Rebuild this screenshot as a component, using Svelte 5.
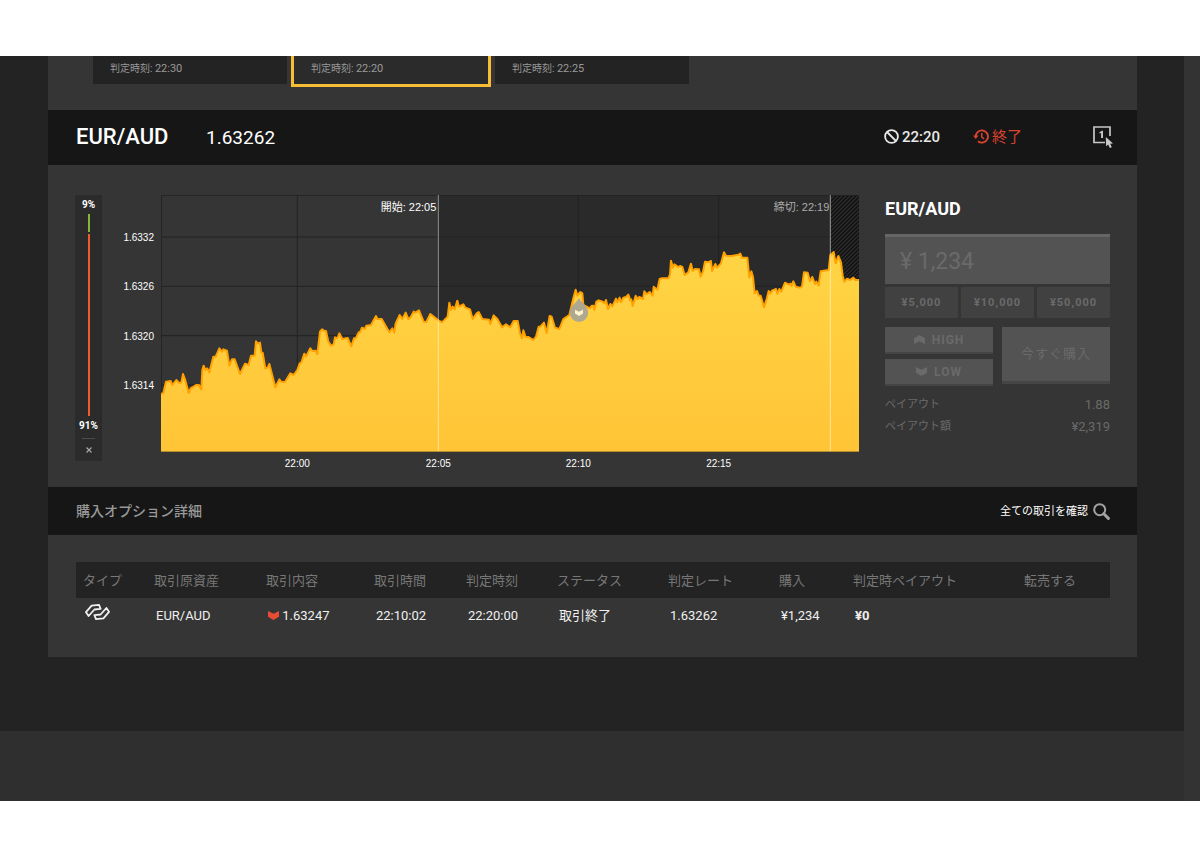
<script>
  const cards = [
    { time: '22:30', active: false },
    { time: '22:20', active: true },
    { time: '22:25', active: false }
  ];

  // Price line in chart units: 2094 wide, 771 high.
  const line =
    '0,596 7,595 15,560 29,558 34,570 46,555 53,563 61,563 66,537 72,553 83,594 89,580 105,570 114,570 121,584 124,525 128,512 133,525 138,520 145,532 157,485 164,485 175,460 183,470 187,463 198,467 205,512 213,493 221,493 237,537 252,506 263,510 270,482 281,482 285,439 291,446 297,443 301,473 305,473 313,520 320,518 325,507 331,530 343,577 355,553 360,560 372,561 388,535 398,540 409,525 416,505 421,503 430,476 435,485 448,460 454,468 464,467 469,478 477,410 483,403 489,407 495,408 502,440 510,452 518,448 522,427 529,430 535,415 544,432 560,429 571,454 579,430 584,430 593,412 597,412 603,398 612,402 616,392 630,390 645,363 649,372 662,372 685,412 694,400 700,413 704,385 716,360 724,372 734,353 742,372 749,367 758,350 763,353 774,346 788,380 796,381 808,357 832,376 843,382 860,365 865,323 870,345 875,335 881,343 889,317 894,335 907,328 912,337 927,343 935,372 947,355 953,351 964,372 984,374 988,387 998,361 1009,372 1023,397 1035,388 1048,397 1058,378 1070,378 1077,415 1083,430 1087,406 1094,426 1103,426 1117,435 1125,425 1133,395 1138,395 1149,383 1157,414 1166,363 1172,365 1182,398 1195,402 1207,372 1225,360 1237,310 1244,284 1249,302 1258,291 1264,295 1267,330 1287,340 1292,332 1297,332 1300,345 1306,320 1313,316 1325,320 1330,325 1335,315 1341,342 1348,327 1354,334 1365,311 1369,322 1376,308 1380,322 1387,308 1395,306 1402,299 1408,316 1411,313 1415,333 1424,302 1430,312 1435,306 1446,312 1450,289 1457,298 1466,291 1475,302 1478,275 1489,284 1496,252 1503,250 1522,250 1527,238 1530,197 1536,218 1540,208 1552,216 1557,213 1564,216 1571,240 1582,232 1590,206 1595,228 1602,222 1614,223 1619,245 1626,230 1632,200 1642,202 1650,198 1653,228 1663,207 1668,218 1680,205 1689,172 1695,182 1711,183 1733,179 1738,176 1743,188 1759,188 1765,248 1771,229 1776,246 1781,295 1788,288 1793,302 1799,302 1809,337 1817,312 1823,288 1828,295 1834,286 1840,284 1845,282 1849,297 1855,282 1861,290 1872,263 1884,269 1889,266 1892,273 1897,259 1904,275 1917,278 1923,275 1929,232 1940,233 1947,259 1954,246 1962,267 1966,260 1973,271 1979,229 2003,225 2008,180 2018,171 2024,205 2032,183 2040,202 2045,242 2050,260 2058,251 2067,255 2077,248 2083,255 2094,255';

  const priceTicks = [
    { label: '1.6332', y: 126 },
    { label: '1.6326', y: 274 },
    { label: '1.6320', y: 422 },
    { label: '1.6314', y: 570 }
  ];
  const timeTicks = [
    { label: '22:00', x: 409 },
    { label: '22:05', x: 832 },
    { label: '22:10', x: 1252 },
    { label: '22:15', x: 1673 }
  ];
  const amounts = ['¥5,000', '¥10,000', '¥50,000'];
  const columns = [
    ['タイプ', 71],
    ['取引原資産', 112],
    ['取引内容', 108],
    ['取引時間', 92],
    ['判定時刻', 91],
    ['ステータス', 111],
    ['判定レート', 111],
    ['購入', 74],
    ['判定時ペイアウト', 171],
    ['転売する', 93]
  ];
  let amount = $state('¥ 1,234');
</script>

<div class="page">
  <div class="content">
    <div class="cards">
      {#each cards as card}
        <div class="card" class:active={card.active}>判定時刻: <span>{card.time}</span></div>
      {/each}
    </div>

    <header class="bar top">
      <h1>EUR/AUD</h1>
      <span class="rate">1.63262</span>
      <span class="status">
        <svg width="15" height="15" viewBox="0 0 15 15" fill="none" stroke="currentColor" stroke-width="1.8">
          <circle cx="7.5" cy="7.5" r="6.4" />
          <path d="M3 3l9 9" />
        </svg>
        22:20
      </span>
      <span class="status ended">
        <svg width="16" height="15" viewBox="0 0 16 15" fill="none" stroke="currentColor">
          <path d="M2.8 8.2A6.1 6.1 0 1 1 5 12.2" stroke-width="1.9" />
          <path d="M0 6.6h5.6L2.8 10z" fill="currentColor" stroke="none" />
          <path d="M8.7 4v4l2.4 1.9" stroke-width="1.5" />
        </svg>
        終了
      </span>
      <button class="oneclick" aria-label="1">
        <svg width="21" height="23" viewBox="0 0 21 23">
          <path d="M17 10V1H1v15.500h11" fill="none" stroke="#c8c8c8" stroke-width="1.7" />
          <path d="M6.500 6.300L8.800 4.700H10V12H8.100V7L6.500 7.600z" fill="#c8c8c8" />
          <path d="M12.800 11l.300 9.200 2.100-1.700 1.600 3.600 2-.900-1.600-3.400 2.800-.300z" fill="#c8c8c8" />
        </svg>
      </button>
    </header>

    <section class="trade">
      <aside class="sentiment">
        <b>9%</b>
        <i class="up"></i>
        <i class="down"></i>
        <b>91%</b>
        <hr />
        <button aria-label="×">
          <svg width="6" height="6" viewBox="0 0 6 6"><path d="M.5.5l5 5m0-5l-5 5" stroke="#aaa" stroke-width="1.1" /></svg>
        </button>
      </aside>

      <div class="chart">
        <div class="plot">
          <svg class="graph" viewBox="0 0 2094 771" preserveAspectRatio="none">
            <defs>
              <linearGradient id="gold" x1="0" y1="0" x2="0" y2="1">
                <stop offset="0" stop-color="#ffd545" />
                <stop offset="1" stop-color="#ffc436" />
              </linearGradient>
              <pattern id="hatch" width="12" height="12" patternUnits="userSpaceOnUse">
                <rect width="12" height="12" fill="#303030" />
                <path d="M-3 3L3-3M0 12L12 0M9 15L15 9" stroke="#121212" stroke-width="5" />
              </pattern>
            </defs>
            <rect x="832" width="1182" height="771" fill="#2a2a2a" />
            <rect x="2010" width="84" height="771" fill="url(#hatch)" />
            <g stroke="#222" stroke-width="3">
              {#each priceTicks as t}<path d="M0 {t.y}H2010" />{/each}
              {#each timeTicks as t}<path d="M{t.x} 0V771" />{/each}
              <path d="M1 771V1H2094" fill="none" />
            </g>
            <polygon points="0,771 {line} 2094,771" fill="url(#gold)" />
            <polyline points={line} fill="none" stroke="#ffa200" stroke-width="6" stroke-linejoin="round" />
            <path d="M832 0V771M2008 0V771" stroke="#fff" stroke-width="3" stroke-opacity=".5" />
            <path d="M0 770H2094" stroke="#a8832c" stroke-width="3" />
          </svg>
          {#each priceTicks as t}
            <span class="price" style="top: {(t.y / 771) * 100}%">{t.label}</span>
          {/each}
          {#each timeTicks as t}
            <span class="time" style="left: {(t.x / 2094) * 100}%">{t.label}</span>
          {/each}
          <span class="mark start" style="right: {(1 - 832 / 2094) * 100}%">開始: 22:05</span>
          <span class="mark close" style="right: {(1 - 2008 / 2094) * 100}%">締切: 22:19</span>
          <svg class="pin" style="left: {(1255 / 2094) * 100}%; top: {(308 / 771) * 100}%" width="20" height="24" viewBox="0 0 20 24">
            <path d="M10 0C12.5 5 19.2 8 19.2 14.8a9.2 9.2 0 0 1-18.4 0C.8 8 7.5 5 10 0z" fill="#a9a598" fill-opacity=".93" />
            <path d="M6 11.8l4 2 4-2v3.7l-4 2.5-4-2.5z" fill="#fff3cf" />
          </svg>
        </div>
      </div>

      <form class="order">
        <h2><label for="amount">EUR/AUD</label></h2>
        <input id="amount" type="text" bind:value={amount} />
        <div class="amounts">
          {#each amounts as a}<button type="button">{a}</button>{/each}
        </div>
        <div class="actions">
          <div class="sides">
            <button type="button">
              <svg width="11" height="9" viewBox="0 0 11 9"><path d="M0 3.2L5.5 0 11 3.2V9L5.5 6.2 0 9z" fill="currentColor" /></svg>
              HIGH
            </button>
            <button type="button">
              <svg width="11" height="9" viewBox="0 0 11 9"><path d="M0 0l5.5 2.8L11 0v5.8L5.5 9 0 5.8z" fill="currentColor" /></svg>
              LOW
            </button>
          </div>
          <button type="button" class="buy">今すぐ購入</button>
        </div>
        <dl>
          <div><dt>ペイアウト</dt><dd>1.88</dd></div>
          <div><dt>ペイアウト額</dt><dd>¥2,319</dd></div>
        </dl>
      </form>
    </section>

    <div class="bar details">
      <h3>購入オプション詳細</h3>
      <a href="#all">
        <span>全ての取引を確認</span>
        <svg width="17" height="17" viewBox="0 0 17 17" fill="none" stroke="#a3a3a3">
          <circle cx="6.7" cy="6.7" r="5.5" stroke-width="2" />
          <path d="M10.8 10.8l4.6 4.6" stroke-width="3" stroke-linecap="round" />
        </svg>
      </a>
    </div>

    <section class="trades">
      <table>
        <colgroup>
          {#each columns as [, w]}<col style="width: {(w / 1034) * 100}%" />{/each}
        </colgroup>
        <thead>
          <tr>{#each columns as [name]}<th>{name}</th>{/each}</tr>
        </thead>
        <tbody>
          <tr>
            <td>
              <svg class="type" width="25" height="17" viewBox="0 0 25 17" fill="none" stroke="#f0f0f0" stroke-width="1.8" stroke-linejoin="round">
                <path d="M3.6 12L1 8.2 6.6 1.7 14 .9l1.6 4-6.2.6z" />
                <path d="M21.4 4L24 7.8l-5.600 6.500-7.400.8-1.600-4 6.200-.6z" />
              </svg>
            </td>
            <td>EUR/AUD</td>
            <td>
              <svg width="11" height="9" viewBox="0 0 11 9"><path d="M0 0l5.5 2.8L11 0v5.8L5.5 9 0 5.8z" fill="#e84c35" /></svg>
              1.63247
            </td>
            <td>22:10:02</td>
            <td>22:20:00</td>
            <td>取引終了</td>
            <td>1.63262</td>
            <td>¥1,234</td>
            <td><b>¥0</b></td>
            <td></td>
          </tr>
        </tbody>
      </table>
    </section>
  </div>
  <footer></footer>
</div>

<style>
  :global(body) {
    background: #fff;
  }
  * {
    box-sizing: border-box;
  }
  .page {
    margin: 56px 0;
    background: #232323;
    border-right: 16px solid #333;
    color: #fff;
    font: 13px/20px Roboto, "Noto Sans CJK JP", sans-serif;
  }
  button {
    font: inherit;
    color: inherit;
    border: 0;
    padding: 0;
    background: none;
    cursor: pointer;
  }
  svg {
    display: block;
    flex: none;
  }
  .content {
    margin: 0 47px 0 48px;
    background: #353535;
  }
  .cards {
    display: grid;
    grid-template-columns: repeat(3, 194px);
    gap: 7px;
    height: 54px;
    padding-left: 45px;
    overflow: hidden;
  }
  .card {
    height: 28px;
    padding: 3px 17px;
    background: #232323;
    color: #999;
    font-size: 10px;
  }
  .card span {
    font-size: 11px;
  }
  .card.active {
    background: #2b2b2b;
    box-shadow: 0 0 0 3px #f6bd35;
  }
  .bar {
    display: flex;
    align-items: center;
    background: #161616;
    padding: 0 27px 0 28px;
  }
  .top {
    height: 55px;
    padding: 0 23px 2px 28px;
  }
  h1,
  h2,
  h3 {
    margin: 0;
    font-weight: 500;
  }
  h1 {
    font-size: 22px;
    width: 130px;
  }
  .rate {
    font-size: 19px;
    padding-top: 2px;
    margin-right: auto;
  }
  .status {
    display: flex;
    align-items: center;
    gap: 3px;
    width: 89px;
    font-size: 15px;
    font-weight: 500;
    color: #e8e8e8;
  }
  .ended {
    width: 120px;
    color: #d9432f;
    font-weight: 400;
  }
  .oneclick {
    padding-top: 2px;
  }
  .trade {
    display: flex;
    align-items: flex-start;
    height: 322px;
    padding: 30px 27px 0;
  }
  .sentiment {
    display: flex;
    flex-direction: column;
    align-items: center;
    width: 27px;
    height: 266px;
    background: #2b2b2b;
    font-size: 10px;
    line-height: 19px;
  }
  .sentiment i {
    width: 2px;
  }
  .up {
    height: 18px;
    margin-bottom: 2px;
    background: #83b735;
  }
  .down {
    flex: 1;
    background: #f15a2b;
  }
  .sentiment hr {
    width: 13px;
    margin: 3px 0 8px;
    border: 0;
    border-top: 1px solid #4c4c4c;
  }
  .sentiment button {
    margin-bottom: 8px;
  }
  .chart {
    flex: 1;
    margin: 0 26px 0 59px;
  }
  .plot {
    position: relative;
    height: 257px;
  }
  .graph {
    width: 100%;
    height: 100%;
  }
  .price,
  .time,
  .mark {
    position: absolute;
    white-space: nowrap;
    font: 10px/14px "Liberation Sans", "Noto Sans CJK JP", sans-serif;
  }
  .price {
    right: 100%;
    margin: 1px 7px 0 0;
    transform: translateY(-50%);
  }
  .time {
    top: 100%;
    margin-top: 5px;
    transform: translateX(-50%);
  }
  .mark {
    top: 5px;
    padding-right: 2px;
    font-size: 11px;
  }
  .close {
    padding-right: 1px;
    color: #aaa;
  }
  .pin {
    position: absolute;
    transform: translateX(-50%);
  }
  .order {
    width: 225px;
    color: #6a6a6a;
  }
  h2 {
    font-size: 18px;
    font-weight: 700;
    line-height: 28px;
    color: #fff;
  }
  input {
    display: block;
    width: 100%;
    height: 50px;
    margin: 11px 0 3px;
    padding: 2px 15px 0;
    border: 0;
    border-top: 3px solid #666;
    background: #535353;
    color: #6a6a6a;
    font: 23px Roboto, sans-serif;
  }
  .amounts {
    display: grid;
    grid-template-columns: repeat(3, 1fr);
    gap: 3px;
  }
  .amounts button {
    height: 31px;
    background: #414141;
    font-size: 11px;
    font-weight: 700;
    letter-spacing: 1px;
  }
  .actions {
    display: grid;
    grid-template-columns: 1fr 1fr;
    gap: 9px;
    margin: 9px 0 8px;
  }
  .sides {
    display: grid;
    gap: 5px;
  }
  .sides button {
    display: flex;
    align-items: center;
    justify-content: center;
    gap: 7px;
    height: 27px;
    background: #535353;
    border-bottom: 2px solid #454545;
    font-size: 12px;
    font-weight: 700;
    letter-spacing: 1px;
  }
  .buy {
    height: 57px;
    background: #535353;
    border-bottom: 3px solid #454545;
    letter-spacing: 1px;
  }
  dl {
    margin: 0;
  }
  dl div {
    display: flex;
    justify-content: space-between;
    line-height: 22px;
  }
  dt {
    font-size: 11px;
  }
  dd {
    margin: 0;
  }
  .details {
    height: 48px;
  }
  h3 {
    flex: 1;
    font-size: 14px;
    color: #999;
  }
  .details a {
    display: flex;
    align-items: center;
    gap: 5px;
    color: #fff;
    font-size: 11px;
    text-decoration: none;
  }
  .details a span {
    padding-top: 2px;
  }
  .trades {
    padding: 27px 27px 24px 28px;
  }
  table {
    width: 100%;
    table-layout: fixed;
    border-collapse: collapse;
  }
  th {
    height: 36px;
    padding: 1px 0 0 7px;
    background: #232323;
    color: #777;
    font-weight: 400;
    text-align: left;
    white-space: nowrap;
  }
  td {
    height: 35px;
    padding: 0 0 0 9px;
    color: #f0f0f0;
    white-space: nowrap;
  }
  td svg {
    display: inline-block;
  }
  footer {
    height: 70px;
    margin-top: 74px;
    background: #2f2f2f;
  }
</style>
